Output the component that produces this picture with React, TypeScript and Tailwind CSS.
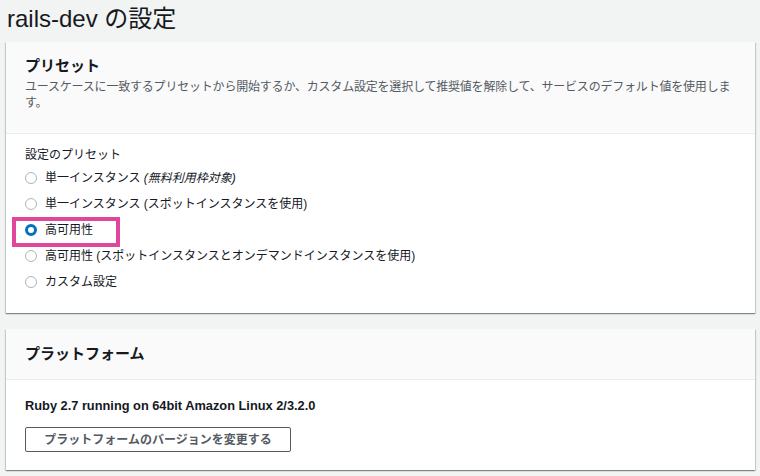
import React from "react";

const font = {
  fontFamily:
    '"Liberation Sans", "Noto Sans CJK JP", "Noto Sans", sans-serif',
};

const options: { label: React.ReactNode; selected?: boolean }[] = [
  {
    label: (
      <>
        単一インスタンス <i>(無料利用枠対象)</i>
      </>
    ),
  },
  { label: "単一インスタンス (スポットインスタンスを使用)" },
  { label: "高可用性", selected: true },
  { label: "高可用性 (スポットインスタンスとオンデマンドインスタンスを使用)" },
  { label: "カスタム設定" },
];

function Radio({ selected }: { selected?: boolean }) {
  return selected ? (
    <span className="box-border block h-[12px] w-[12px] shrink-0 rounded-full border-[3.5px] border-[#0073bb] bg-white" />
  ) : (
    <span className="box-border block h-[12px] w-[12px] shrink-0 rounded-full border border-[#aab7b8] bg-white" />
  );
}

export default function App() {
  return (
    <div
      className="min-h-[476px] w-[760px] bg-[#f2f3f3] pl-[6px] pr-[5px] text-[#16191f]"
      style={font}
    >
      <h1 className="h-[42px] pl-[1px] pt-[3px] text-[24px] leading-[32px] font-normal">
        rails-dev の設定
      </h1>

      {/* Preset card */}
      <div className="bg-white shadow-[0_1px_1px_0_rgba(0,28,36,0.3),1px_1px_1px_0_rgba(0,28,36,0.15),-1px_1px_1px_0_rgba(0,28,36,0.15)]">
        <div className="border-b border-[#eaeded] bg-[#fafafa] px-[19px] pt-[13px] pb-[22px]">
          <h2 className="text-[15px] leading-[22px] font-bold">プリセット</h2>
          <p className="mt-[2px] text-[12px] leading-[16px] tracking-[-0.2px] text-[#545b64]">
            ユースケースに一致するプリセットから開始するか、カスタム設定を選択して推奨値を解除して、サービスのデフォルト値を使用します。
          </p>
        </div>
        <div className="px-[19px] pt-[13px] pb-[18px]">
          <div className="text-[12px] leading-[16px]">設定のプリセット</div>
          <div className="mt-[2px] flex flex-col">
            {options.map((o, i) => (
              <div
                key={i}
                className="relative flex h-[26px] items-center gap-[8px] text-[12px]"
              >
                <span className="flex w-[12px] shrink-0 justify-center">
                  <Radio selected={o.selected} />
                </span>
                <span>{o.label}</span>
                {o.selected && (
                  <span className="pointer-events-none absolute left-[-13px] top-0 h-[30px] w-[108px] border-4 border-[#df479d]" />
                )}
              </div>
            ))}
          </div>
        </div>
      </div>

      {/* Platform card */}
      <div className="mt-[16px] bg-white shadow-[0_1px_1px_0_rgba(0,28,36,0.3),1px_1px_1px_0_rgba(0,28,36,0.15),-1px_1px_1px_0_rgba(0,28,36,0.15)]">
        <div className="border-b border-[#eaeded] bg-[#fafafa] px-[19px] pt-[14px] pb-[14px]">
          <h2 className="text-[15px] leading-[22px] font-bold">プラットフォーム</h2>
        </div>
        <div className="px-[19px] pt-[18px] pb-[18px]">
          <div className="text-[12.8px] leading-[16px] font-bold">
            Ruby 2.7 running on 64bit Amazon Linux 2/3.2.0
          </div>
          <button className="mt-[13px] box-border flex h-[25px] w-[266px] items-center justify-center rounded-[2px] border border-[#545b64] bg-white text-[12px] font-bold text-[#545b64]">
            プラットフォームのバージョンを変更する
          </button>
        </div>
      </div>
    </div>
  );
}
